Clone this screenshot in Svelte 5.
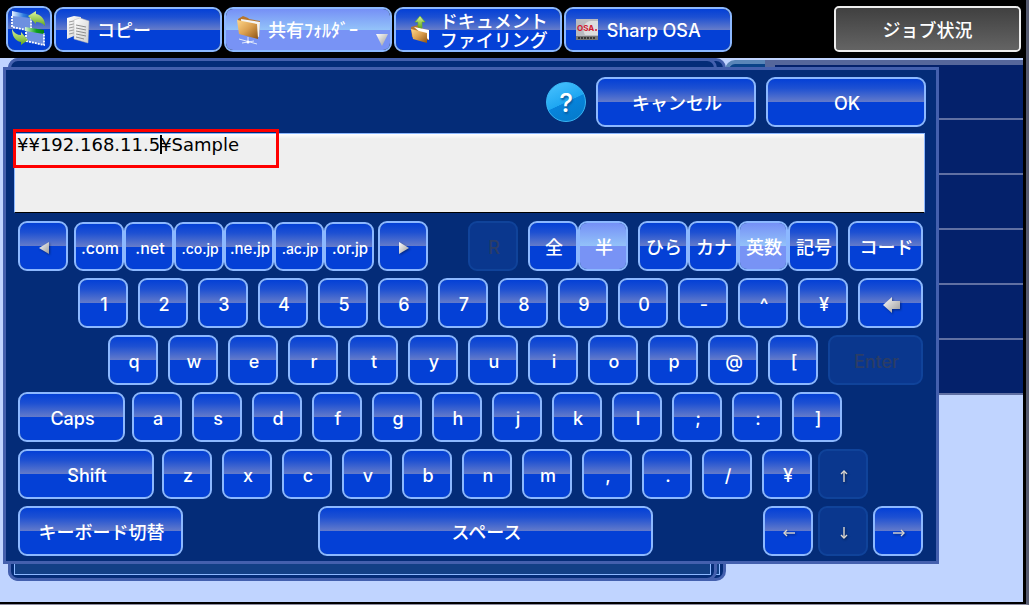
<script>
  const k = (chars) => chars.flatMap((c, i) => (i ? [{ gap: 10 }, { t: c, w: 50 }] : [{ t: c, w: 50 }]));

  const rows = [
    [
      { icon: 'prev', label: 'Previous', w: 50 }, { gap: 6 },
      { t: '.com', w: 50, domain: true, size: 'm' },
      { t: '.net', w: 50, domain: true, size: 'm' },
      { t: '.co.jp', w: 50, domain: true, size: 'xs' },
      { t: '.ne.jp', w: 50, domain: true, size: 's' },
      { t: '.ac.jp', w: 50, domain: true, size: 'xs' },
      { t: '.or.jp', w: 50, domain: true, size: 's' },
      { gap: 4 }, { icon: 'next', label: 'Next', w: 50 },
      { gap: 40 }, { t: 'R', w: 50, off: true },
      { gap: 10 }, { t: '全', w: 50 }, { t: '半', w: 50, on: true },
      { gap: 10 }, { t: 'ひら', w: 50 }, { t: 'カナ', w: 50 }, { t: '英数', w: 50, on: true }, { t: '記号', w: 50 },
      { gap: 10 }, { t: 'コード', w: 75 }
    ],
    [{ gap: 60 }, ...k([...'1234567890-^¥']), { gap: 10 }, { icon: 'back', label: 'Backspace', w: 65 }],
    [{ gap: 90 }, ...k([...'qwertyuiop@[']), { gap: 10 }, { t: 'Enter', w: 95, off: true }],
    [{ t: 'Caps', w: 107 }, { gap: 7 }, ...k([...'asdfghjkl;:]']), { gap: 81 }],
    [{ t: 'Shift', w: 136 }, { gap: 8 }, ...k([...'zxcvbnm,./¥']), { gap: 6 }, { icon: 'up', label: 'Up', w: 50, off: true }, { gap: 55 }],
    [
      { t: 'キーボード切替', w: 165 }, { gap: 135 }, { t: 'スペース', w: 335 }, { gap: 110 },
      { icon: 'left', label: 'Left', w: 50 }, { gap: 5 },
      { icon: 'down', label: 'Down', w: 50, off: true }, { gap: 5 },
      { icon: 'right', label: 'Right', w: 50 }
    ]
  ];

  const columns = (row) => row.map((c) => `minmax(0, ${c.gap ?? c.w}fr)`).join(' ');
  const turns = { left: 0, up: 90, right: 180, down: 270 };
  let address = $state('¥¥192.168.11.5¥Sample');
</script>

<svg width="0" height="0" class="defs" aria-hidden="true">
  <defs>
    <linearGradient id="silver" x1="0" y1="0" x2="1" y2="1"><stop offset="0" stop-color="#fff" /><stop offset="1" stop-color="#999" /></linearGradient>
    <linearGradient id="amber" x1="0" y1="0" x2="1" y2="1"><stop offset="0" stop-color="#ffd78a" /><stop offset=".5" stop-color="#dba050" /><stop offset="1" stop-color="#8d5314" /></linearGradient>
    <linearGradient id="leaf" x1="0" y1="0" x2="0" y2="1"><stop offset="0" stop-color="#e2f7a0" /><stop offset="1" stop-color="#5fa81c" /></linearGradient>
    <linearGradient id="paper" x1="0" y1="0" x2="1" y2="1"><stop offset="0" stop-color="#fff" /><stop offset="1" stop-color="#cfcfcf" /></linearGradient>
    <linearGradient id="titleblue"><stop offset="0" stop-color="#e8f2ff" /><stop offset=".6" stop-color="#2f7de0" /><stop offset="1" stop-color="#0c52c0" /></linearGradient>
    <linearGradient id="titlegreen"><stop offset="0" stop-color="#d8f5d0" /><stop offset=".6" stop-color="#0da01c" /><stop offset="1" stop-color="#078010" /></linearGradient>
  </defs>
</svg>

<div class="device">
  <header class="top">
    <nav>
      <button class="key swap" aria-label="Switch">
        <svg viewBox="0 0 36 38" width="36" height="38">
          <path d="M1 2 20 6V21L1 17z" fill="#6d90e0" />
          <path d="M1 1 20 5V8L1 6z" fill="url(#titleblue)" />
          <path d="M1 6V17L20 21V6" fill="none" stroke="#fff" stroke-width="1.8" stroke-dasharray="2 1" />
          <path d="M15 18 33 21V35L15 31z" fill="#6d90e0" />
          <path d="M14 17 33 20V24L14 21z" fill="url(#titlegreen)" />
          <path d="M15 22V31L33 35V23" fill="none" stroke="#fff" stroke-width="1.8" stroke-dasharray="2 1" />
          <path d="M17 6 25 1V4C31 5 34 10 34 16 31 13 29 12 25 12V14z" fill="url(#leaf)" />
          <path d="M1 19C3 23 6 25 10 25V22L17 30 10 35V32C4 31 1 26 1 19z" fill="url(#leaf)" />
        </svg>
      </button>
      <button class="key mode">
        <svg viewBox="0 0 24 30" width="24" height="30">
          <path d="M1 3 8 1 15 2V22L8 21 1 24z" fill="url(#paper)" />
          <path d="M3 7 12 5M3 10 12 8M3 13 12 11M3 16 12 14M3 19 12 17" stroke="#888" stroke-width=".8" />
          <path d="M8 5 14 3 23 6 22 28 8 24z" fill="url(#paper)" stroke="#b5b5b5" stroke-width=".5" />
          <path d="M10 10 20 12M10 13 20 15M10 16 20 18M10 19 20 21M10 22 18 24" stroke="#777" stroke-width=".8" />
        </svg>
        <span>コピー</span>
      </button>
      <button class="key mode on">
        <svg viewBox="0 0 25 30" width="25" height="30">
          <path d="M2 4 7 1 12 3 13 4 24 6 23 22 5 19z" fill="#b7752c" />
          <path d="M5 4 24 7 23 22 6 18z" fill="#f4f4f4" />
          <path d="M1 5 21 9 22 24 3 19z" fill="url(#amber)" />
          <path d="M12 22V26M3 24 21 29M6 28 18 26" stroke="#dfe7fb" stroke-width="1" fill="none" />
          <circle cx="12" cy="27" r="1.5" fill="#fff" />
        </svg>
        <span>共有ﾌｫﾙﾀﾞｰ</span>
        <svg class="drop" viewBox="0 0 12 13" width="12" height="13"><path d="M0 0H12L6 12z" fill="url(#silver)" /></svg>
      </button>
      <button class="key mode tight">
        <svg viewBox="0 0 20 28" width="20" height="28">
          <path d="M1 11 8 9 10 12 19 14V24L2 21z" fill="#b7752c" />
          <path d="M4 11 19 14V24z" fill="#fff" />
          <path d="M1 13 17 17V27L3 23z" fill="url(#amber)" />
          <path d="M10 0 15 6H12V12L8 11V6H5z" fill="url(#leaf)" stroke="#6bb01d" stroke-width=".6" />
        </svg>
        <span>ドキュメント<br />ファイリング</span>
      </button>
      <button class="key mode osa-mode">
        <svg viewBox="0 0 22 22" width="22" height="22">
          <rect width="22" height="21" fill="#b9bac0" />
          <path d="M9 16C5 9 9 2 15 2H22V16z" fill="#ddd" />
          <text x="1" y="12" class="osa">OSA</text>
          <circle cx="20" cy="11" r="1" fill="#d01830" />
          <rect y="17" width="22" height="4" fill="#777" />
          <path d="M2 19H20" stroke="#222" stroke-width="1.5" stroke-dasharray="2 1" />
        </svg>
        <span>Sharp OSA</span>
      </button>
    </nav>
    <button class="job">ジョブ状況</button>
  </header>

  <main>
    <div class="sheet rear"></div>
    <div class="sheet"></div>
    <div class="tab"></div>
    <div class="list">
      <i></i><i></i><i></i><i></i><i></i><i></i>
    </div>

    <section class="dialog">
      <div class="actions">
        <button class="help" aria-label="Help">?</button>
        <button class="key action">キャンセル</button>
        <button class="key action">OK</button>
      </div>
      <div class="entry">
        <textarea aria-label="Address" spellcheck="false" bind:value={address}></textarea>
        <span class="caret"></span>
        <span class="mark"></span>
      </div>
      <div class="keyboard">
        {#each rows as row}
          <div class="row" style="grid-template-columns:{columns(row)}">
            {#each row as c}
              {#if c.gap}
                <span></span>
              {:else}
                <button
                  class={['key', c.size, { on: c.on, off: c.off, domain: c.domain }]}
                  disabled={c.off}
                  aria-label={c.label}
                >
                  {#if c.icon === 'prev' || c.icon === 'next'}
                    <svg class="glyph" viewBox="0 0 12 14" width="12" height="14">
                      <path d={c.icon === 'prev' ? 'M11 1V13L1 7z' : 'M1 1V13L11 7z'} fill="url(#silver)" />
                    </svg>
                  {:else if c.icon === 'back'}
                    <svg class="glyph" viewBox="0 0 18 16" width="18" height="16">
                      <path d="M0 8 9 0V4H17V12H9V16z" fill="url(#silver)" />
                    </svg>
                  {:else if c.icon}
                    <svg class="glyph" viewBox="0 0 14 14" width="14" height="14">
                      <g transform="rotate({turns[c.icon]} 7 7)" fill="none" stroke="#ddd8cf">
                        <path d="M2 7H13" stroke-width="1.4" />
                        <path d="M5 4 2 7 5 10" stroke-width="1.4" />
                      </g>
                    </svg>
                  {:else}{c.t}{/if}
                </button>
              {/if}
            {/each}
          </div>
        {/each}
      </div>
    </section>
  </main>
</div>

<style>
  :global(body) { margin: 0; background: #000; }
  .defs { position: absolute; }
  .device {
    box-sizing: border-box;
    min-height: 100vh;
    display: flex;
    flex-direction: column;
    background: #000;
    border-right: 3px solid #565b70;
    border-bottom: 1px solid #8c8ca0;
    font-family: Inter, "Noto Sans CJK JP", sans-serif;
    font-size: 18px;
    font-weight: 500;
    color: #fff;
  }
  button {
    box-sizing: border-box;
    margin: 0;
    font: inherit;
    line-height: 19px;
    color: #fff;
    white-space: nowrap;
  }
  .top {
    display: flex;
    justify-content: space-between;
    align-items: center;
    height: 58px;
    padding: 0 5px 0 6px;
  }
  nav {
    display: grid;
    grid-template-columns: 46px repeat(4, minmax(0, 1fr));
    gap: 2px;
    align-items: center;
    width: 71.5%;
  }
  .key {
    display: flex;
    align-items: center;
    justify-content: center;
    min-width: 0;
    height: 50px;
    padding: 3px 0 0 2px;
    border: 2px solid #8cb8ff;
    border-radius: 9px;
    background: linear-gradient(#0440d6 0, #1d50d2 20%, #647bca 50%, #0440d6 50%) padding-box;
  }
  .on { background: linear-gradient(#7590f6, #93c2f9 50%, #7893f5 50%) padding-box; }
  .off {
    background: #0a378e;
    border-color: #10439a;
    color: #2b3d66;
  }
  .swap { height: 46px; padding: 0; }
  .mode {
    position: relative;
    height: 45px;
    justify-content: flex-start;
    gap: 7px;
    padding: 1px 0 0 10px;
    text-align: left;
  }
  .mode span { padding-top: 2px; }
  .mode.tight { gap: 10px; padding-left: 14px; }
  .mode.osa-mode { gap: 9px; }
  .mode svg { flex: none; }
  .mode .drop { position: absolute; right: 2px; bottom: 3px; }
  .osa { font: bold 8px Inter, sans-serif; fill: #d01830; }
  .job {
    width: 187px;
    height: 46px;
    padding: 3px 0 0;
    border: 2px solid #eee;
    border-radius: 5px;
    background: linear-gradient(#404040, #646464) padding-box;
  }
  main {
    position: relative;
    flex: 1;
    margin: 0 3px 2px 0;
    padding: 9px 84px 38px 3px;
    background: #c0d4ff;
  }
  .sheet {
    position: absolute;
    box-sizing: border-box;
    inset: 0 306px 21px 8px;
    border: 3px solid #4460ae;
    border-radius: 10px;
    background: #042c78;
  }
  .sheet::before {
    content: "";
    position: absolute;
    inset: 12px 3px 3px;
    border: 1px solid #8cb8ff;
    background: #123f86;
  }
  .sheet.rear { right: 297px; }
  .tab {
    position: absolute;
    inset: 2px 258px auto auto;
    box-sizing: border-box;
    width: 40px;
    height: 30px;
    border: solid #5a86b8;
    border-width: 4px 0 0 4px;
    border-radius: 10px 0 0;
    background: #0a4388;
  }
  .list {
    position: absolute;
    inset: 2px 0 auto auto;
    box-sizing: border-box;
    width: 258px;
    border: solid #56679b;
    border-width: 5px 0 0 10px;
    background: #04216b;
  }
  .list i {
    display: block;
    box-sizing: border-box;
    height: 55px;
    border-bottom: 2px solid #6070a3;
  }
  .dialog {
    position: relative;
    border: 3px solid #4460ae;
    padding: 7px 10px 5px 8px;
    background: #042c78;
  }
  .actions { display: flex; justify-content: flex-end; align-items: center; gap: 10px; }
  .action { width: 160px; }
  .help {
    width: 40px;
    height: 40px;
    padding: 0;
    border: 1px solid #38b6f5;
    border-radius: 50%;
    background: linear-gradient(155deg, #4cc3ff, #1ea7f2 50%, #0784dc 51%, #0579c8);
    font-size: 26px;
    text-shadow: 1px 2px 2px #0a5da0;
  }
  .entry { position: relative; margin: 6px 1px 0 0; }
  textarea {
    display: block;
    box-sizing: border-box;
    width: 100%;
    height: 80px;
    margin: 0;
    padding: 0 2px;
    border: solid #8cb8ff;
    border-width: 1px 1px 0;
    border-bottom: 1px solid #000;
    border-radius: 0;
    outline: 0;
    resize: none;
    background: linear-gradient(#fff, #efefef 5px);
    color: #000;
    font: 18px/22px "DejaVu Sans", "Noto Sans CJK JP", sans-serif;
  }
  .caret { position: absolute; left: 146px; top: 2px; width: 2px; height: 19px; background: #000; }
  .mark {
    position: absolute;
    left: -1px;
    top: -4px;
    box-sizing: border-box;
    width: 266px;
    height: 39px;
    border: 3px solid #f00;
    pointer-events: none;
  }
  .keyboard { display: flex; flex-direction: column; gap: 7px; margin: 8px 3px 0 4px; }
  .row { display: grid; }
  .row .key { font-size: 18px; }
  .row .domain { height: 49px; margin-top: 1px; }
  .row .m { font-size: 16px; }
  .row .s { font-size: 15px; }
  .row .xs { font-size: 14px; }
  .glyph { display: block; flex: none; filter: drop-shadow(1px 1px 1px #0006); }
</style>
